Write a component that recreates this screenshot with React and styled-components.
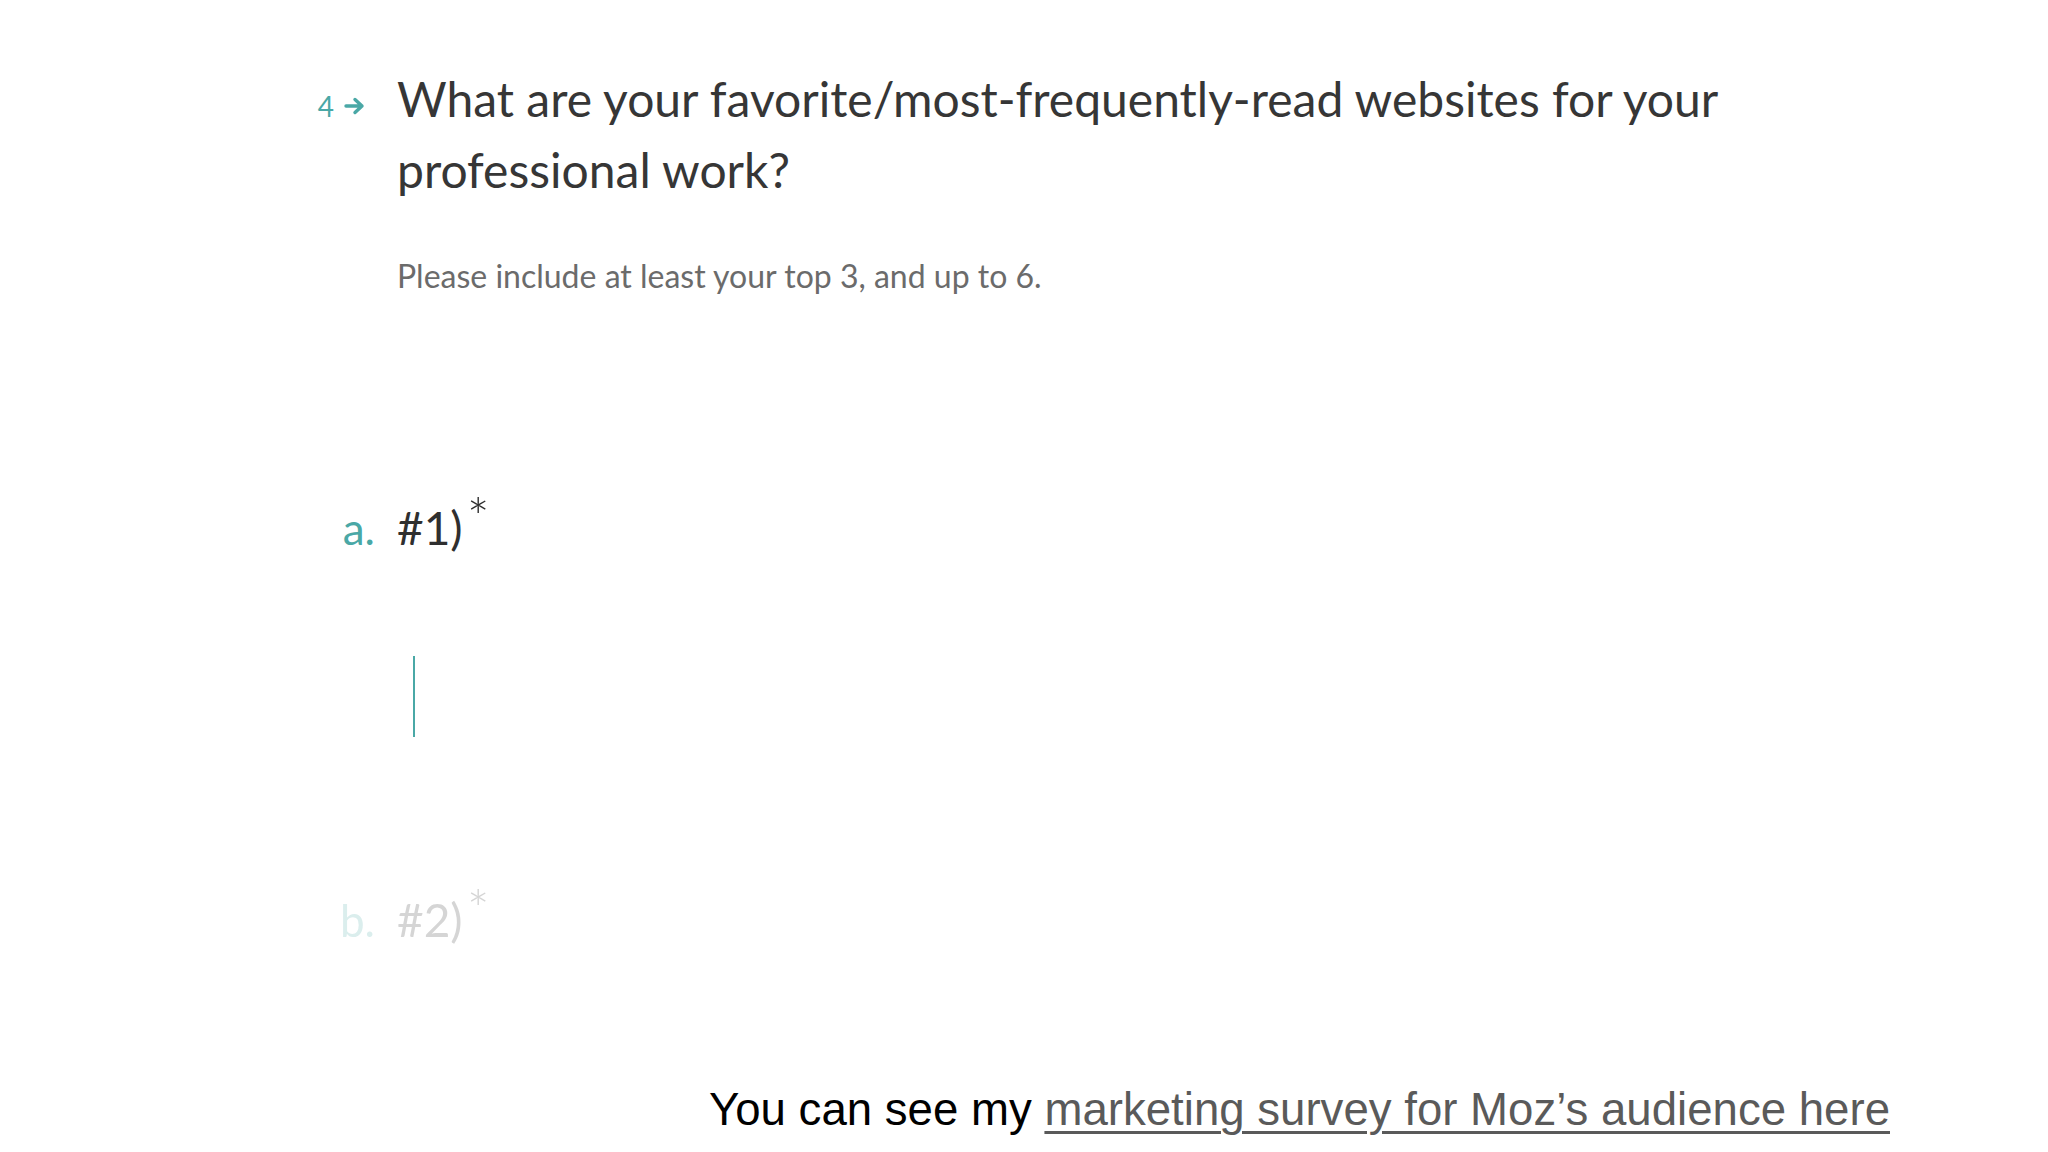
import React from "react";
import styled, { createGlobalStyle } from "styled-components";

const Global = createGlobalStyle`
  html, body { margin: 0; padding: 0; background: #ffffff; }
  body { font-family: "Lato", "Noto Sans", sans-serif; }
`;

const Page = styled.div`
  width: 2048px;
  height: 1152px;
  box-sizing: border-box;
  padding: 63px 0 0 300px;
  display: flex;
  flex-direction: column;
  position: relative;
  overflow: hidden;
`;

const Row = styled.div`
  display: grid;
  grid-template-columns: 97px 1fr;
  align-items: baseline;
  margin-top: ${(p) => p.$top || 0}px;
  opacity: ${(p) => (p.$faded ? 0.2 : 1)};
`;

const Label = styled.div`
  justify-self: end;
  padding-right: ${(p) => p.$pad}px;
  color: #4aa8a6;
  font-size: ${(p) => p.$size}px;
  display: flex;
  align-items: center;
  gap: 10px;
`;

const Title = styled.h1`
  margin: 0;
  font-weight: 400;
  font-size: 48px;
  line-height: 71px;
  color: #363636;
  max-width: 1400px;
`;

const Subtitle = styled.p`
  margin: 0;
  font-size: 32px;
  line-height: 38px;
  color: #6b6b6b;
`;

const FieldTitle = styled.div`
  font-size: 46px;
  line-height: 60px;
  color: #2f2f2f;
  position: relative;
`;

const Star = styled.span`
  display: inline-block;
  font-size: 54px;
  font-weight: 300;
  line-height: 1;
  margin-left: 4px;
  vertical-align: top;
  position: relative;
  top: -8px;
`;

const InputArea = styled.div`
  height: 81px;
  padding-left: 16px;
`;

const Cursor = styled.div`
  width: 2px;
  height: 81px;
  background: #4aa8a6;
`;

const Footer = styled.div`
  position: absolute;
  left: 709px;
  top: 1084px;
  font-family: "Liberation Sans", Arial, sans-serif;
  font-size: 45.6px;
  color: #000;
  white-space: nowrap;
`;

const FooterLink = styled.a`
  color: #5a5a5a;
  text-decoration: underline;
  text-decoration-thickness: 3px;
  text-underline-offset: 6px;
`;

const Arrow = () => (
  <svg width="22" height="18" viewBox="0 0 22 18" fill="none" stroke="#4aa8a6" strokeWidth="3.4" strokeLinecap="round" strokeLinejoin="round">
    <path d="M2 9h16M11 2.5l7 6.5-7 6.5" />
  </svg>
);

export default function App() {
  return (
    <>
      <Global />
      <Page>
        <Row>
          <Label $pad={31} $size={28}>
            <span>4</span>
            <Arrow />
          </Label>
          <Title>
            What are your favorite/most-frequently-read websites for your professional work?
          </Title>
        </Row>
        <Row $top={52}>
          <span />
          <Subtitle>Please include at least your top 3, and up to 6.</Subtitle>
        </Row>
        <Row $top={203}>
          <Label $pad={22} $size={44}>a.</Label>
          <FieldTitle>
            #1)<Star>*</Star>
          </FieldTitle>
        </Row>
        <Row $top={98}>
          <span />
          <InputArea>
            <Cursor />
          </InputArea>
        </Row>
        <Row $top={153} $faded>
          <Label $pad={22} $size={44}>b.</Label>
          <FieldTitle>
            #2)<Star>*</Star>
          </FieldTitle>
        </Row>
        <Footer>
          You can see my <FooterLink href="#">marketing survey for Moz’s audience here</FooterLink>
        </Footer>
      </Page>
    </>
  );
}
